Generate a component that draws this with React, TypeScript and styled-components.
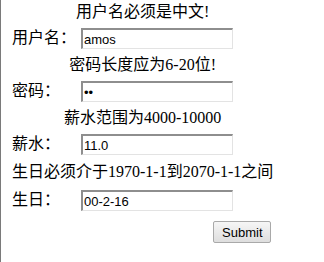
import React from "react";
import styled, { createGlobalStyle } from "styled-components";

const GlobalStyle = createGlobalStyle`
  html, body {
    margin: 0;
    background: #fff;
  }
  body {
    padding: 8px;
    border-left: 1px solid #7a7a7a;
    min-height: 262px;
    box-sizing: border-box;
    font-family: "Liberation Serif", "Noto Sans CJK SC", serif;
    font-size: 16px;
    color: #000;
  }
`;

const Form = styled.form`
  margin: 0;
`;

const Table = styled.table`
  border-collapse: separate;
  border-spacing: 2px;
  margin-top: -11px;
`;

const MessageCell = styled.td<{ $tall?: boolean; $left?: boolean }>`
  padding: 0 1px;
  height: ${(p) => (p.$tall ? 28 : 25)}px;
  text-align: ${(p) => (p.$left ? "left" : "center")};
  white-space: nowrap;
  line-height: 16px;
`;

const Label = styled.td`
  width: 65px;
  padding: 0 1px;
  height: 24px;
  white-space: nowrap;
  line-height: 16px;
`;

const Field = styled.td`
  padding: 1px 1px 0;
`;

const Input = styled.input`
  display: block;
  box-sizing: border-box;
  width: 152px;
  height: 21px;
  margin: 0;
  padding: 1px 1px 0;
  border-style: solid;
  border-width: 2px 1px 1px 2px;
  border-color: #8e8e8e #e3e3e3 #e3e3e3 #8e8e8e;
  font-family: "Liberation Sans", Arial, sans-serif;
  font-size: 13px;
  color: #000;
  outline: none;
`;

const ButtonCell = styled.td`
  padding: 7px 3px 1px 1px;
  text-align: right;
`;

const Button = styled.button`
  width: 58px;
  height: 22px;
  padding: 0;
  border: 1px solid #a9a9a9;
  border-radius: 2px;
  background: linear-gradient(#f6f6f6, #dedede);
  font-family: "Liberation Sans", Arial, sans-serif;
  font-size: 13px;
  color: #000;
`;

type Row = {
  message: string;
  label: string;
  value: string;
  type?: string;
  left?: boolean;
};

const rows: Row[] = [
  { message: "用户名必须是中文!", label: "用户名：", value: "amos" },
  { message: "密码长度应为6-20位!", label: "密码：", value: "ab", type: "password" },
  { message: "薪水范围为4000-10000", label: "薪水：", value: "11.0" },
  {
    message: "生日必须介于1970-1-1到2070-1-1之间",
    label: "生日：",
    value: "00-2-16",
    left: true,
  },
];

export default function App() {
  return (
    <>
      <GlobalStyle />
      <Form onSubmit={(e) => e.preventDefault()}>
        <Table>
          <tbody>
            {rows.map((r) => (
              <React.Fragment key={r.label}>
                <tr>
                  <MessageCell colSpan={2} $left={r.left} $tall={r.left}>
                    {r.message}
                  </MessageCell>
                </tr>
                <tr>
                  <Label>{r.label}</Label>
                  <Field>
                    <Input type={r.type || "text"} defaultValue={r.value} />
                  </Field>
                </tr>
              </React.Fragment>
            ))}
            <tr>
              <ButtonCell colSpan={2}>
                <Button type="submit">Submit</Button>
              </ButtonCell>
            </tr>
          </tbody>
        </Table>
      </Form>
    </>
  );
}
